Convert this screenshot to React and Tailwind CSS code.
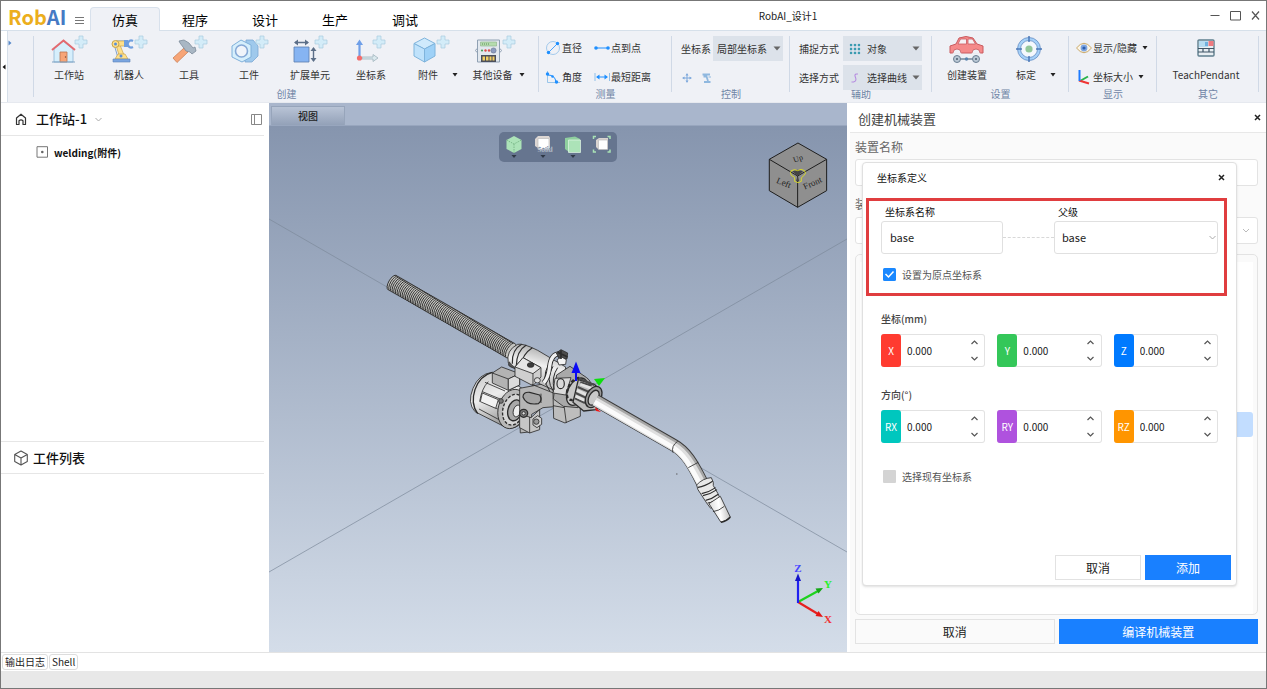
import { useState } from "react";

const Plus = ({ x, y }) => (
  <path
    transform={`translate(${x} ${y})`}
    d="M4 0h4v4h4v4h-4v4h-4v-4h-4v-4h4z"
    fill="#d3ecf8"
    stroke="#a9cbe0"
    strokeWidth="0.7"
  />
);

const HouseIcon = () => (
  <>
    <path d="M3 13L12 5l10 8v13H3z" fill="#d6effc" stroke="#8fb6d6" strokeWidth="0.8" />
    <path d="M1 14L12.500 4.500 24 14" fill="none" stroke="#e36a70" strokeWidth="2" />
    <path d="M9 16h7v10H9z" fill="#f7a577" stroke="#b97550" strokeWidth="0.8" />
    <circle cx="14.500" cy="21" r="0.7" fill="#7a4a30" />
    <path d="M1 26h23" stroke="#7fa4c4" strokeWidth="1" />
    <Plus x={24} y={0} />
  </>
);

const RobotIcon = () => (
  <>
    <path d="M3 8l4 14M5 5h11" stroke="#7fa0ce" strokeWidth="1" />
    <path d="M5 9l3 10h5L9 9z" fill="#ffe08a" stroke="#c9a54c" strokeWidth="0.7" />
    <path d="M5 5h9v5H6z" fill="#ffe08a" stroke="#c9a54c" strokeWidth="0.7" />
    <circle cx="4.500" cy="8" r="3.500" fill="#ffe08a" stroke="#c9a54c" />
    <circle cx="4.500" cy="8" r="1.500" fill="#5b8fd8" />
    <path d="M13 4h4v7h-4z" fill="#6f9fdf" />
    <path d="M22 5a3.500 3.500 0 1 0 0 6" fill="none" stroke="#6f9fdf" strokeWidth="2.200" />
    <path d="M7 18h7l3 5H4z" fill="#ffe08a" stroke="#c9a54c" strokeWidth="0.7" />
    <circle cx="10" cy="20" r="1.500" fill="#5b8fd8" />
    <path d="M2 23h17v3H2z" fill="#7ba6e0" stroke="#5b83bb" strokeWidth="0.6" />
    <Plus x={24} y={0} />
  </>
);

const HammerIcon = () => (
  <>
    <path d="M2 22L13 12l4 4L6 26.500z" fill="#f7a577" stroke="#c98058" strokeWidth="0.8" />
    <path d="M8 5l5-1 5 3 4 5 2-1 1 4-4 3-2-2-4-1-3-4-3-4z" fill="#a9b7c4" stroke="#7c8b9a" strokeWidth="0.8" />
    <Plus x={24} y={0} />
  </>
);

const NutIcon = () => (
  <>
    <path d="M15 4h7l5 6v10l-6 6h-7z" fill="#9fc9ec" stroke="#7ba8d4" strokeWidth="0.8" />
    <path d="M1 10l9-6 10 5v12l-9 5-10-5z" fill="#d6effc" stroke="#7fb0da" />
    <circle cx="10.500" cy="15" r="6" fill="#f0f4fa" stroke="#86a9d6" strokeWidth="1.600" />
    <Plus x={25} y={0} />
  </>
);

const ExtendIcon = () => (
  <>
    <path d="M2 11h15v15H2z" fill="#86b4f2" stroke="#5b7fae" strokeWidth="0.8" />
    <path d="M3 6.500h13M21.500 12.500v12" stroke="#5c6f88" strokeWidth="1.400" />
    <path d="M6 3.500v6L2 6.500zM13 3.500v6l4-3zM18.500 15h6l-3-4zM18.500 22h6l-3 4z" fill="#5c6f88" />
    <Plus x={23} y={0} />
  </>
);

const AxesIcon = () => (
  <>
    <path d="M6.500 22V8" stroke="#6f9fe8" strokeWidth="2.200" />
    <path d="M3 9l3.500-5.500L10 9z" fill="#6f9fe8" />
    <path d="M9 21h11v-2.500l5 3.500-5 3.500V23H9z" fill="#dbe9ee" stroke="#9fb4bd" strokeWidth="0.8" />
    <circle cx="6.500" cy="22" r="2.600" fill="#f26d6d" />
    <Plus x={20} y={0} />
  </>
);

const BoxIcon = () => (
  <g transform="translate(3 0)">
    <path d="M1 7.500L11.500 2 22 7.500 11.500 13z" fill="#cfeafc" stroke="#7fb4dc" />
    <path d="M1 7.500L11.500 13v13L1 20z" fill="#bfe2fb" stroke="#7fb4dc" />
    <path d="M22 7.500L11.500 13v13L22 20z" fill="#9ed1f7" stroke="#7fb4dc" />
    <Plus x={24} y={0} />
  </g>
);

const DeviceIcon = () => (
  <>
    <path d="M2.500 4h22v22h-22z" fill="#e2e8ee" stroke="#8fa0b3" />
    <path d="M5.500 6h16v4h-16z" fill="#b5dcae" stroke="#8bb287" strokeWidth="0.6" />
    <path d="M7 8h3M11 8h3" stroke="#5d8a5a" strokeDasharray="1 1" />
    <circle cx="7" cy="14.500" r="1.100" fill="#4aa05c" />
    <circle cx="10.500" cy="14.500" r="1.200" fill="#dd4b4b" />
    <circle cx="14" cy="14.500" r="1.200" fill="#dd4b4b" />
    <circle cx="18.500" cy="14.500" r="2.600" fill="#8c9cc0" stroke="#66738f" strokeWidth="0.6" />
    <path d="M6 19h15v7H6z" fill="#4b4f5c" />
    <path d="M7.500 20.500H10v4H7.500zM11 20.500h2.500v4H11zM14.500 20.500h2v4h-2zM17.500 20.500h2v4h-2z" fill="#f3cf62" />
    <path d="M2 12.500q-3 2 0 4M25 12.500q3 2 0 4" fill="none" stroke="#8fa0b3" />
    <Plus x={28} y={0} />
  </>
);

const CarIcon = () => (
  <>
    <path d="M1 17v-7l6-2 3-6q7-3 14 0l4 6 6 2v7z" fill="#f58a8a" stroke="#c95b5f" />
    <path d="M9 8l2.500-5h6v5zM19 8V3h4.500l3 5z" fill="#f6f2f5" stroke="#c95b5f" strokeWidth="0.8" />
    <path d="M4 17.500a4 4 0 0 1 8 0zM23 17.500a4 4 0 0 1 8 0z" fill="#eff1f6" stroke="#eff1f6" strokeWidth="0.8" />
    <path d="M4 17a4 4 0 0 1 8 0M23 17a4 4 0 0 1 8 0" fill="none" stroke="#c95b5f" strokeWidth="0.8" />
    <path d="M11 23h13" stroke="#6b7f92" strokeWidth="1.400" />
    <circle cx="8" cy="23" r="3.500" fill="#b9c7d4" stroke="#6b7f92" />
    <circle cx="8" cy="23" r="1" fill="#4c5e70" />
    <circle cx="27" cy="23" r="3.500" fill="#b9c7d4" stroke="#6b7f92" />
    <circle cx="27" cy="23" r="1" fill="#4c5e70" />
    <circle cx="17.500" cy="23" r="1.700" fill="#5a84ad" />
  </>
);

const TargetIcon = () => (
  <>
    <circle cx="21" cy="13" r="10" fill="#f4f8fd" stroke="#a5d0f8" strokeWidth="3" />
    <circle cx="21" cy="13" r="11.500" fill="none" stroke="#5b84bb" strokeWidth="0.7" />
    <circle cx="21" cy="13" r="8.500" fill="none" stroke="#5b84bb" strokeWidth="0.7" />
    <path d="M21 0v6M21 20v6M8 13h6M28 13h6" stroke="#4b78b8" strokeWidth="1.500" />
    <circle cx="21" cy="13" r="3.600" fill="#92c79a" />
  </>
);

const PendantIcon = () => (
  <>
    <rect x="10" y="4" width="16" height="16" rx="1" fill="#e8eef2" stroke="#5f7f8e" strokeWidth="1.400" />
    <path d="M11 5h9v6h-9z" fill="#b6dcf0" />
    <path d="M17 6h3v4h-3z" fill="#6fb0dd" />
    <path d="M20.500 5h5v5h-5z" fill="#ee7a80" />
    <path d="M10 12.500h16M10 16h16M15 12v4M21 12v4" stroke="#3f5566" strokeWidth="1.200" />
  </>
);

const Caret = () => (
  <svg width="8" height="4" viewBox="0 0 8 4" aria-hidden="true">
    <path d="M1.500 0h5L4 3.500z" fill="#222" />
  </svg>
);

function BigButton({ label, icon: Icon, wide, menu }) {
  return (
    <div className="flex items-end">
      <button className={`flex flex-col items-center ${wide}`}>
        <svg width="36" height="28" viewBox="0 0 36 28" className="overflow-visible" aria-hidden="true">
          <Icon />
        </svg>
        <span className="mt-[3px] whitespace-nowrap text-[10px] leading-4 text-[#333]">{label}</span>
      </button>
      {menu && (
        <button aria-label={`${label} 菜单`} className="flex h-4 w-2 items-center">
          <Caret />
        </button>
      )}
    </div>
  );
}

function Group({ title, width, children }) {
  return (
    <section aria-label={title} className={`flex shrink-0 flex-col ${width}`}>
      <div className="h-[61px] border-r border-[#d0d9e6]">
        <div className="h-[55px]">{children}</div>
      </div>
      <div className="-mt-1.5 text-center text-[10px] leading-4 text-[#7085a6]">{title}</div>
    </section>
  );
}

function SmallButton({ label, children, menu }) {
  return (
    <button className="flex h-[25px] items-center gap-px whitespace-nowrap pb-0.5 text-[10px] text-[#333]">
      <svg width="16" height="16" viewBox="0 0 16 16" aria-hidden="true">
        {children}
      </svg>
      {label}
      {menu && (
        <span className="ml-[3px]">
          <Caret />
        </span>
      )}
    </button>
  );
}

function RibbonSelect({ label, value, width, pad, icon }) {
  return (
    <label className="flex h-[25px] items-center justify-between whitespace-nowrap text-[10px] text-[#333]">
      {label}
      <span className={`relative flex h-full items-center ${width}`}>
        <select className={`h-full w-full appearance-none bg-[#dce2ea] text-[10px] text-[#333] ${pad}`}>
          <option>{value}</option>
        </select>
        {icon && (
          <svg width="12" height="12" viewBox="0 0 12 12" className="pointer-events-none absolute left-1.5" aria-hidden="true">
            {icon}
          </svg>
        )}
        <svg width="8" height="5" viewBox="0 0 8 5" className="pointer-events-none absolute right-0.5" aria-hidden="true">
          <path d="M0.500 0.500h7L4 4.500z" fill="#666" />
        </svg>
      </span>
    </label>
  );
}

const MENU = ["仿真", "程序", "设计", "生产", "调试"];

function TitleBar() {
  const [active, setActive] = useState("仿真");
  return (
    <header className="flex h-[29px] items-end bg-white">
      <div className="flex h-full w-[67px] shrink-0 items-center pl-[7px] pt-0.5 text-[20px] font-bold leading-none">
        <span className="text-[#ecae1c]">Rob</span>
        <span className="text-[#467ac4]">AI</span>
      </div>
      <button aria-label="菜单" className="flex h-full w-[22px] shrink-0 items-center justify-center pt-2">
        <svg width="9" height="8" viewBox="0 0 9 8" aria-hidden="true">
          <path d="M0 1.500h9M0 4.500h9M0 7.500h9" stroke="#777" />
        </svg>
      </button>
      <nav className="flex shrink-0">
        {MENU.map((m) => (
          <button
            key={m}
            onClick={() => setActive(m)}
            className={
              m === active
                ? "relative -mb-px h-6 w-[70px] rounded-t border border-b-0 border-[#d8e1ec] bg-[#eff1f6] text-[13px] leading-4 text-black"
                : "h-[23px] w-[70px] pt-0.5 text-[13px] leading-4 text-black"
            }
          >
            {m}
          </button>
        ))}
      </nav>
      <h1 className="flex h-full min-w-0 flex-1 items-center justify-center pr-[68px] text-[10px] text-[#222]">RobAI_设计1</h1>
      <div className="flex h-full shrink-0 items-center pr-px">
        <button aria-label="最小化" className="flex h-full w-[21px] items-center justify-center">
          <svg width="10" height="10" viewBox="0 0 10 10"><path d="M0.500 4.500h9" stroke="#555" /></svg>
        </button>
        <button aria-label="最大化" className="flex h-full w-[21px] items-center justify-center">
          <svg width="11" height="10" viewBox="0 0 11 10"><path d="M0.500 0.500h10v8.500h-10z" fill="none" stroke="#555" /></svg>
        </button>
        <button aria-label="关闭" className="flex h-full w-[19px] items-center justify-center">
          <svg width="9" height="9" viewBox="0 0 9 9"><path d="M1 0.500l7 8M8 0.500l-7 8" stroke="#555" strokeWidth="1.200" /></svg>
        </button>
      </div>
    </header>
  );
}

function Ribbon() {
  return (
    <div className="flex h-[73px] border-y border-t-[#d6e0ea] border-b-[#e6e9ef] bg-[#eff1f6]">
      <button aria-label="向左滚动" className="flex w-[7px] shrink-0 items-center border-r border-[#d6dfe9] bg-white">
        <svg width="5" height="6" viewBox="0 0 5 6"><path d="M4.500 0.500v5L1.500 3z" fill="#111" /></svg>
      </button>
      <div className="flex min-w-0 flex-1 overflow-hidden pt-[5px]">
        <div className="h-[61px] w-[26px] shrink-0 border-r border-[#d0d9e6] pt-1">
          <svg width="4" height="6" viewBox="0 0 4 6" aria-hidden="true"><path d="M0.500 0.500v5L3.500 3z" fill="#5688c8" /></svg>
        </div>
        <Group title="创建" width="w-[505px]">
          <div className="flex pl-[5px]">
            <BigButton label="工作站" icon={HouseIcon} wide="w-[60px]" />
            <BigButton label="机器人" icon={RobotIcon} wide="w-[60px]" />
            <BigButton label="工具" icon={HammerIcon} wide="w-[60px]" />
            <BigButton label="工件" icon={NutIcon} wide="w-[60px]" />
            <BigButton label="扩展单元" icon={ExtendIcon} wide="w-[62px]" />
            <BigButton label="坐标系" icon={AxesIcon} wide="w-[60px]" />
            <div className="flex gap-2 pl-1">
              <BigButton label="附件" icon={BoxIcon} wide="w-[46px]" menu />
              <BigButton label="其他设备" icon={DeviceIcon} wide="w-[51px]" menu />
            </div>
          </div>
        </Group>
        <Group title="测量" width="w-[133px]">
          <div className="grid grid-cols-[auto_1fr] gap-x-3 gap-y-1 pl-1.5">
            <SmallButton label="直径">
              <circle cx="8" cy="8" r="6.500" fill="none" stroke="#8fbfe8" strokeWidth="0.8" />
              <path d="M4 12l8.500-8.500" stroke="#1e8fff" strokeWidth="0.8" />
              <circle cx="3.500" cy="12.500" r="1.700" fill="#1e8fff" />
              <circle cx="12.500" cy="3.500" r="1.700" fill="#1e8fff" />
            </SmallButton>
            <SmallButton label="点到点">
              <path d="M1 8h14" stroke="#1e8fff" />
              <circle cx="2" cy="8" r="1.800" fill="#1e8fff" />
              <circle cx="14" cy="8" r="1.800" fill="#1e8fff" />
            </SmallButton>
            <SmallButton label="角度">
              <path d="M2.500 2v11.500H15" fill="none" stroke="#8fbfe8" strokeWidth="0.9" />
              <path d="M3 6q7 0 8 7" fill="none" stroke="#1e8fff" />
              <circle cx="2.500" cy="5" r="1.700" fill="#1e8fff" />
              <circle cx="7.500" cy="7.500" r="1.300" fill="#1e8fff" />
              <circle cx="11.500" cy="13" r="1.700" fill="#1e8fff" />
            </SmallButton>
            <SmallButton label="最短距离">
              <path d="M1 4v8M15.500 4v8" stroke="#8fbfe8" />
              <path d="M3 8h10" stroke="#1e8fff" />
              <path d="M5.500 5.500v5L2 8zM10.500 5.500v5L14 8z" fill="#1e8fff" />
            </SmallButton>
          </div>
        </Group>
        <Group title="控制" width="w-[118px]">
          <div className="flex flex-col gap-1 pl-[9px] pr-1.5">
            <RibbonSelect label="坐标系" value="局部坐标系" width="w-[70px]" pad="pl-1" />
            <div className="flex h-[25px] items-center gap-2.5 pl-px">
              <button aria-label="移动">
                <svg width="10" height="10" viewBox="0 0 10 10">
                  <path d="M5 1v8M1 5h8" stroke="#7fa9dc" />
                  <path d="M3.500 2.500L5 0l1.500 2.500zM3.500 7.500L5 10l1.500-2.500zM2.500 3.500L0 5l2.500 1.500zM7.500 3.500L10 5 7.500 6.500z" fill="#7fa9dc" />
                </svg>
              </button>
              <button aria-label="机器人控制">
                <svg width="10" height="10" viewBox="0 0 10 10">
                  <path d="M0.500 1.500H8M1.500 3.500h3L6 8M2 9h6.500" fill="none" stroke="#8fb8df" strokeWidth="1.800" />
                  <path d="M9 4H6.500" stroke="#8fb8df" />
                </svg>
              </button>
            </div>
          </div>
        </Group>
        <Group title="辅助" width="w-[142px]">
          <div className="flex flex-col gap-1 pl-[9px] pr-[9px]">
            <RibbonSelect
              label="捕捉方式"
              value="对象"
              width="w-[79px]"
              pad="pl-6"
              icon={
                <>
                  <path d="M2 0.500v11M6 0.500v11M10 0.500v11M0.500 2h11M0.500 6h11M0.500 10h11" stroke="#9cc4d8" />
                  <path d="M1 1h2v2H1zM5 1h2v2H5zM9 1h2v2H9zM1 5h2v2H1zM5 5h2v2H5zM9 5h2v2H9zM1 9h2v2H1zM5 9h2v2H5zM9 9h2v2H9z" fill="#3b9cb0" />
                </>
              }
            />
            <RibbonSelect
              label="选择方式"
              value="选择曲线"
              width="w-[79px]"
              pad="pl-6"
              icon={<path d="M9 2H7.500Q5 2 6.500 5.500T4.500 10H2.500" fill="none" stroke="#b58be0" strokeWidth="1.100" />}
            />
          </div>
        </Group>
        <Group title="设置" width="w-[137px]">
          <div className="flex gap-2.5 pl-[9px]">
            <BigButton label="创建装置" icon={CarIcon} wide="w-[52px]" />
            <BigButton label="标定" icon={TargetIcon} wide="w-[46px]" menu />
          </div>
        </Group>
        <Group title="显示" width="w-[88px]">
          <div className="flex flex-col gap-1 pl-[7px]">
            <SmallButton label="显示/隐藏" menu>
              <path d="M0.500 8Q8-1.500 15.500 8 8 17.500 0.500 8z" fill="#fbf5e8" stroke="#c9a86a" />
              <circle cx="8" cy="8" r="3.400" fill="#7fa6e0" />
              <circle cx="8" cy="8" r="1.600" fill="#2c5fae" />
            </SmallButton>
            <SmallButton label="坐标大小" menu>
              <path d="M4 12L12 7.500" stroke="#27b34a" strokeWidth="2" />
              <path d="M3 11.500l10 3" stroke="#f03434" strokeWidth="2" />
              <path d="M3.500 1v11" stroke="#1e7bff" strokeWidth="2" />
            </SmallButton>
          </div>
        </Group>
        <Group title="其它" width="w-[102px]">
          <div className="flex pl-2">
            <BigButton label="TeachPendant" icon={PendantIcon} wide="w-[82px]" />
          </div>
        </Group>
      </div>
    </div>
  );
}

function LeftPanel() {
  return (
    <aside className="flex w-[268px] shrink-0 flex-col bg-white pr-[5px]">
      <div className="flex h-[33px] shrink-0 items-center border-b border-[#e6e6e6] pl-[14px] pr-0.5">
        <svg width="12" height="13" viewBox="0 0 12 13" aria-hidden="true">
          <path d="M1.500 5L6 1.200 10.500 5v6.500H8V7.800Q6 6 4 7.800v3.700H1.500z" fill="none" stroke="#333" strokeWidth="1.200" strokeLinejoin="round" />
        </svg>
        <button className="ml-[9px] flex items-center gap-2 text-[13px] font-medium text-[#111]">
          工作站-1
          <svg width="7" height="5" viewBox="0 0 7 5" aria-hidden="true"><path d="M0.500 1l3 3 3-3" fill="none" stroke="#aaa" /></svg>
        </button>
        <button aria-label="切换侧栏" className="ml-auto">
          <svg width="11" height="11" viewBox="0 0 11 11"><path d="M0.500 0.500h10v10h-10zM3.500 0.500v10" fill="none" stroke="#888" /></svg>
        </button>
      </div>
      <ul className="flex-1 pl-[35px] pt-2">
        <li className="flex h-4 items-center gap-[5px] text-[10px] font-bold text-[#111]">
          <svg width="13" height="12" viewBox="0 0 13 12" aria-hidden="true">
            <path d="M1 0.700h10.500v10.500H1z" fill="none" stroke="#777" />
            <circle cx="6.300" cy="6" r="1.300" fill="#666" />
          </svg>
          welding(附件)
        </li>
      </ul>
      <section className="h-[211px] shrink-0 border-t border-[#e6e6e6]">
        <h2 className="flex h-8 items-center gap-1 border-b border-[#e6e6e6] pl-3 text-[13px] font-medium text-[#111]">
          <svg width="16" height="16" viewBox="0 0 16 16" aria-hidden="true">
            <path d="M8 1l6.300 3.500v7L8 15l-6.300-3.500v-7zM1.700 4.500L8 8l6.300-3.500M8 8v7" fill="none" stroke="#555" strokeWidth="1.100" strokeLinejoin="round" />
          </svg>
          工件列表
        </h2>
      </section>
    </aside>
  );
}

const RINGS = Array.from({ length: 72 }, (_, i) => ({ x: 52 + i * 5, y: 53 + i * 2.87 }));

function Torch() {
  return (
    <g transform="translate(375 265) scale(0.3333)" stroke="#2b2b2b" strokeWidth="2.500" strokeLinejoin="round">
      {RINGS.map((r) => (
        <ellipse key={r.x} cx={r.x} cy={r.y} rx="11" ry="25" transform={`rotate(30 ${r.x} ${r.y})`} fill="#c4c4c0" strokeWidth="2.600" />
      ))}
      {/* motor */}
      <path d="M352 322q-40 4-58 48t6 70l90 46q22 8 40-4l14-20 0-90-70-46z" fill="url(#metal)" />
      <path d="M352 322q-38 10-52 52t8 72" fill="none" strokeWidth="4" />
      <path d="M340 350q-20 20-26 60M322 380l58 24M316 404l52 28M312 432l60 32M330 352l60 26" fill="none" />
      <path d="M322 384l48 20-8 26-46-20z" fill="#f2f2f2" />
      <ellipse cx="412" cy="432" rx="42" ry="60" transform="rotate(16 412 432)" fill="#b9b9b9" />
      <ellipse cx="416" cy="434" rx="32" ry="47" transform="rotate(16 416 434)" fill="#d6d6d6" strokeWidth="4" strokeDasharray="9 5" />
      <ellipse cx="420" cy="436" rx="21" ry="32" transform="rotate(16 420 436)" fill="#a8a8a8" strokeWidth="4" />
      <ellipse cx="426" cy="438" rx="11" ry="18" transform="rotate(16 426 438)" fill="#eee" />
      <circle cx="378" cy="408" r="7" fill="#777" />
      <path d="M352 324l28-18 54 20v34l-34 16-48-22z" fill="#b3b3b3" />
      <path d="M352 324l48 18 34-16M400 342v32" fill="none" />
      <path d="M400 342l34-16v34l-34 16z" fill="#dcdcdc" />
      {/* gun body */}
      <path d="M428 238q16-4 60 18l84 50-6 80-42-10-124-82q-8-38 28-56z" fill="url(#body)" />
      <path d="M440 238q-30 16-28 58M454 240q-30 18-30 64M472 248q-30 20-32 50" fill="none" strokeWidth="3.500" />
      <path d="M404 290q-8 12 4 16l14 6" fill="#555" />
      <path d="M420 306l24-28 54 30v28l-24 26-54-28z" fill="#cfcfcf" />
      <path d="M444 278l54 30-24 18-54-20z" fill="#e6e6e6" />
      <path d="M474 326v36" />
      <ellipse cx="467" cy="300" rx="10" ry="7" fill="#3c3c3c" />
      <ellipse cx="487" cy="346" rx="9" ry="8" fill="#ddd" />
      {/* bracket */}
      <path d="M434 370l64-12 40 18 12 48-46 4-34 20v52l-34 4-2-50z" fill="#b5b5b5" />
      <path d="M434 446l34 12 26-24v60l-30 10-30-16z" fill="#c6c6c6" />
      <path d="M464 456v48M470 358l70 28" />
      <path d="M444 396q0-16 20-14l30 8q10 16-4 26-36 6-46-20z" fill="#a3a3a3" strokeWidth="3.500" />
      <path d="M498 386v28" />
      <circle cx="446" cy="445" r="12" fill="#777" strokeWidth="4" />
      <circle cx="446" cy="445" r="5" fill="#ddd" />
      <path d="M474 462l14-10 12 8v18l-14 10-12-8z" fill="#cfcfcf" />
      <circle cx="484" cy="470" r="8" fill="#999" />
      <path d="M534 382l34 10 48-14v76l-46 20-34-14z" fill="#bdbdbd" />
      <path d="M568 392v36l-34-6M568 428l6 46" fill="none" />
      {/* clamp */}
      <path d="M545 330l40-26 50 34q20 14 8 34l-34 56-44-4-30-22z" fill="#a9a9a9" />
      <path d="M540 340l48-2-16 52-38-6z" fill="#dadada" />
      <ellipse cx="557" cy="356" rx="11" ry="15" fill="#d9d9d9" strokeWidth="3.500" />
      <path d="M520 300q-22 40 4 78M534 304q-24 40 2 76M548 308q-20 30-10 66" fill="none" strokeWidth="3" />
      {/* cable */}
      <path d="M506 354q14-14 18-50t28-38" fill="none" strokeWidth="15" />
      <path d="M506 354q14-14 18-50t28-38" fill="none" stroke="#f1f1f1" strokeWidth="10" />
      <path d="M544 264l14-10 20 10-2 18-22 2z" fill="#4b4b4b" />
      <path d="M546 284l14-8 14 8-2 14-20 2z" fill="#f4f4f4" />
      <path d="M548 262l30 14M558 256v26" strokeWidth="5" />
      {/* knob */}
      <ellipse cx="606" cy="380" rx="27" ry="44" transform="rotate(28 606 380)" fill="#c8c8c8" strokeWidth="4" />
      <ellipse cx="600" cy="372" rx="20" ry="36" transform="rotate(28 600 372)" fill="none" strokeWidth="7" strokeDasharray="10 7" />
      <path d="M610 344l48 14q24 20 20 42l-14 34-38 4-32-26z" fill="#bcbcbc" strokeWidth="4" />
      <path d="M616 352l34 10M608 366l32 14M602 384l30 14M600 400l30 14M612 340l46 20" strokeWidth="6" stroke="#4a4a4a" />
      <path d="M616 358l32 12M606 376l30 14M602 394l26 12" strokeWidth="8" stroke="#e4e4e4" />
      <ellipse cx="656" cy="396" rx="22" ry="34" transform="rotate(28 656 396)" fill="#9a9a9a" strokeWidth="4" />
      <ellipse cx="656" cy="398" rx="14" ry="24" transform="rotate(28 656 398)" fill="#c8c8c8" strokeWidth="4" />
      {/* neck */}
      <path d="M662 406L896 540C932 560 952 594 981 652" fill="none" stroke="#3b3b3b" strokeWidth="38" />
      <path d="M661 406L896 541C932 561 952 596 981 652" fill="none" stroke="#a6a6a6" strokeWidth="33" />
      <path d="M659 409L893 543C929 563 949 598 978 654" fill="none" stroke="#dedede" strokeWidth="26" />
      <path d="M659 411L891 545C926 565 945 600 974 655" fill="none" stroke="#fbfbfb" strokeWidth="14" />
      <path d="M908 529q-20 14-14 34M970 592l-30 16" fill="none" />
      {/* nozzle */}
      <path d="M965 660q18-20 44-22l6 14 0 10 14 24 6 14-2 16-26 14-12-16-26-40z" fill="#e8e8e8" />
      <path d="M969 667q20-2 44-18M980 686q22-4 42-18M984 692q22-4 42-18M992 706q20-4 38-18M998 714q18-2 38-16" fill="none" strokeWidth="3.500" />
      <path d="M1002 716l34-22 30 62q-12 12-28 16z" fill="url(#tip)" />
      <path d="M1014 740q18-2 34-16" fill="none" />
      <path d="M1038 772q18-4 28-16" fill="none" strokeWidth="5" />
    </g>
  );
}

function Scene() {
  return (
    <svg viewBox="269 126 578 526" preserveAspectRatio="xMidYMid slice" className="absolute inset-0 h-full w-full" role="img" aria-label="三维视图">
      <defs>
        <linearGradient id="metal" x1="0" y1="0" x2="0.400" y2="1">
          <stop offset="0" stopColor="#c4c4c4" />
          <stop offset="0.500" stopColor="#ededed" />
          <stop offset="1" stopColor="#9a9a9a" />
        </linearGradient>
        <linearGradient id="body" x1="0.600" y1="0" x2="0.300" y2="1">
          <stop offset="0" stopColor="#a0a0a0" />
          <stop offset="0.400" stopColor="#f0f0f0" />
          <stop offset="1" stopColor="#9c9c9c" />
        </linearGradient>
        <linearGradient id="tip" x1="0" y1="0.600" x2="1" y2="0.400">
          <stop offset="0" stopColor="#d8d8d8" />
          <stop offset="0.500" stopColor="#ffffff" />
          <stop offset="1" stopColor="#b5b5b5" />
        </linearGradient>
      </defs>
      <path d="M269 219L847 552M269 572L847 239" stroke="#7d899b" strokeWidth="0.7" />
      <Torch />
      <path d="M576 381v-10" stroke="#0a0af5" strokeWidth="2" />
      <path d="M571.500 373l4.500-11.500 4.500 11.500z" fill="#0a0af5" />
      <path d="M594 379l11-1-6 8z" fill="#0ce00c" />
      <path d="M595 407l1 4 5 1z" fill="#f01818" />
      <path d="M676 474h1.500" stroke="#444" strokeWidth="0.800" />
      {/* orientation cube */}
      <g transform="translate(480 100) scale(0.3333)" strokeLinejoin="round">
        <path d="M954 129l86 49v94l-87 50-85-50v-94z" fill="#8f8f8f" stroke="#1d1d1d" strokeWidth="3" />
        <path d="M868 178l85 50 87-50M953 228v94" fill="none" stroke="#1d1d1d" strokeWidth="3" />
        <path d="M953 228l-16-14 16-5 16 5zM953 228l-5 16h10z" fill="#444" />
        <path d="M934 212q10-6 19 0 10-8 21 0 6 10-2 14l-8 8v10q-10 8-20 0v-12l-10-6q-5-8 0-14z" fill="none" stroke="#e6e619" strokeWidth="2.500" />
        <g fill="#1f1f1f" fontFamily='"Liberation Serif", serif' fontSize="27" textAnchor="middle">
          <text x="954" y="184" fontSize="24" transform="rotate(-20 954 176)">Up</text>
          <text x="911" y="257" transform="rotate(22 911 250)">Left</text>
          <text x="998" y="258" transform="rotate(-24 998 250)">Front</text>
        </g>
      </g>
      {/* axis triad */}
      <path d="M798 602L818 591" stroke="#1ed21e" strokeWidth="2.200" />
      <path d="M823 588l-7.500 0.500 3 5z" fill="#14a814" />
      <path d="M798 602l20 12" stroke="#e62020" strokeWidth="2.200" />
      <path d="M823 617l-4.500-6-3 5z" fill="#e61414" />
      <path d="M798 603V580" stroke="#2020f0" strokeWidth="2.200" />
      <path d="M795 581l3-7.500 3 7.500z" fill="#1414c8" />
      <g fontFamily='"Liberation Serif", serif' fontWeight="700" fontSize="11" textAnchor="middle">
        <text x="798" y="572" fill="#4646ff">Z</text>
        <text x="828" y="588" fill="#28f028">Y</text>
        <text x="828" y="623" fill="#f03232">X</text>
      </g>
    </svg>
  );
}

const VIEW_TOOLS = [
  {
    name: "视角",
    menu: true,
    art: (
      <>
        <path d="M10 1l7.500 4v9L10 18l-7.500-4V5z" fill="#ace3b8" />
        <path d="M2.500 5L10 9l7.500-4M10 9v9" fill="none" stroke="#6fae7e" strokeDasharray="1.500 1" strokeWidth="0.800" />
      </>
    ),
  },
  {
    name: "显示模式",
    menu: true,
    art: (
      <>
        <path d="M2 4l3-3h11l1 2v10H5l-3-2z" fill="#dcd6d3" />
        <path d="M5 3.500h11v11H5z" fill="#fff" stroke="#bbb" strokeWidth="0.700" />
        <text x="12" y="17" fontSize="6" fontWeight="700" textAnchor="middle" fill="#e9eef5" stroke="#66758f" strokeWidth="0.300">Solid</text>
      </>
    ),
  },
  {
    name: "剖切",
    menu: true,
    art: (
      <>
        <path d="M2 3l10-1.500L17 4v13H6L2 14z" fill="#8fcf9f" />
        <path d="M5.500 5H17.500v12.500H5.500z" fill="#ace3b8" stroke="#e3f6e7" strokeWidth="0.700" />
      </>
    ),
  },
  {
    name: "适应窗口",
    menu: false,
    art: (
      <>
        <path d="M1.500 4V1.500H4M15.500 1.500H18V4M18 14.500V17h-2.500M4 17H1.500v-2.500" fill="none" stroke="#a9e2b5" strokeWidth="1.500" />
        <path d="M4 5l3-2h9v11H6l-2-2z" fill="#d9d3d0" />
        <path d="M6.500 5h9v9.500h-9z" fill="#fff" stroke="#bbb" strokeWidth="0.700" />
      </>
    ),
  },
];

function Viewport() {
  return (
    <section className="flex min-w-0 flex-1 flex-col bg-[#a9b6cc]">
      <div className="flex h-[23px] shrink-0 items-end border-b border-[#98a6be] pl-0.5">
        <button className="h-[19px] w-[74px] border border-b-0 border-[#97a5bb] bg-linear-to-b from-[#b9c4d6] to-[#93a1b8] text-[10px] font-medium leading-4 text-[#222]">视图</button>
      </div>
      <div className="relative flex-1 overflow-hidden bg-linear-to-b from-[#8695ae] to-[#d4dde9]">
        <Scene />
        <div className="absolute left-1/2 top-1.5 flex h-[30px] w-[118px] -translate-x-1/2 items-start justify-between rounded-[5px] bg-[#66758f] px-[5px] pt-[3px]">
          {VIEW_TOOLS.map((t) => (
            <button key={t.name} aria-label={t.name} className="flex flex-col items-center">
              <svg width="20" height="20" viewBox="0 0 20 20" className="overflow-visible">
                {t.art}
              </svg>
              {t.menu && (
                <svg width="6" height="3" viewBox="0 0 6 3"><path d="M0.500 0h5L3 3z" fill="#2f3947" /></svg>
              )}
            </button>
          ))}
        </div>
      </div>
    </section>
  );
}

const AXES = [
  { name: "X", color: "bg-[#ff3b30]" },
  { name: "Y", color: "bg-[#34c759]" },
  { name: "Z", color: "bg-[#007aff]" },
];
const ROTATIONS = [
  { name: "RX", color: "bg-[#00c7be]" },
  { name: "RY", color: "bg-[#af52de]" },
  { name: "RZ", color: "bg-[#ff9500]" },
];

function SpinBox({ name, color, step }) {
  const [value, setValue] = useState("0.000");
  const bump = (d) => setValue(((parseFloat(value) || 0) + d).toFixed(3));
  return (
    <div className="flex h-[33px] min-w-0 rounded-[3px] border border-l-0 border-[#e2e2e2] bg-white">
      <label htmlFor={`field-${name}`} className={`-my-px flex w-5 shrink-0 items-center justify-center rounded-[3px] text-[10px] text-white ${color}`}>
        {name}
      </label>
      <input
        id={`field-${name}`}
        inputMode="decimal"
        value={value}
        onChange={(e) => setValue(e.target.value)}
        className="w-0 min-w-0 flex-1 px-1.5 text-[10px] text-[#222] outline-none"
      />
      <div className="flex w-5 shrink-0 flex-col">
        <button aria-label={`${name} 增加`} onClick={() => bump(step)} className="flex flex-1 items-center justify-center">
          <svg width="7" height="5" viewBox="0 0 7 5"><path d="M0.500 4l3-3 3 3" fill="none" stroke="#555" strokeWidth="1.200" /></svg>
        </button>
        <button aria-label={`${name} 减少`} onClick={() => bump(-step)} className="flex flex-1 items-center justify-center">
          <svg width="7" height="5" viewBox="0 0 7 5"><path d="M0.500 1l3 3 3-3" fill="none" stroke="#555" strokeWidth="1.200" /></svg>
        </button>
      </div>
    </div>
  );
}

const CloseMark = () => (
  <svg width="7" height="7" viewBox="0 0 7 7" aria-hidden="true">
    <path d="M1 1l5 5M6 1L1 6" stroke="#222" strokeWidth="1.500" />
  </svg>
);

function FrameDialog() {
  const [origin, setOrigin] = useState(true);
  return (
    <div role="dialog" aria-label="坐标系定义" className="absolute left-3 right-[29px] top-[59px] flex h-[424px] flex-col rounded-sm border border-[#e0e0e0] bg-white shadow-sm">
      <div className="flex h-[35px] shrink-0 items-center justify-between pb-1.5 pl-[14px] pr-[11px] text-[10px] text-[#111]">
        <h3>坐标系定义</h3>
        <button aria-label="关闭">
          <CloseMark />
        </button>
      </div>
      <div className="ml-[3px] mr-[9px] h-[98px] border-3 border-[#e03d3f] pl-3 pr-1.5 pt-[3px] text-[10px] text-[#111]">
        <div className="grid grid-cols-[122px_1fr_164px] items-end">
          <label htmlFor="frame-name" className="pl-1 leading-4">坐标系名称</label>
          <span />
          <label htmlFor="frame-parent" className="pl-1 leading-4">父级</label>
          <input id="frame-name" defaultValue="base" className="mt-px h-[33px] w-full rounded-[3px] border border-[#e0e0e0] pb-px pl-2 text-[11px] text-[#222] outline-none" />
          <span className="mb-4 border-t border-dashed border-[#d8d8d8]" />
          <span className="relative mt-px flex h-[33px] items-center">
            <select id="frame-parent" className="h-full w-full appearance-none rounded-[3px] border border-[#e0e0e0] bg-white pl-[7px] text-[11px] text-[#222] outline-none">
              <option>base</option>
            </select>
            <svg width="7" height="5" viewBox="0 0 7 5" className="pointer-events-none absolute right-0.5" aria-hidden="true">
              <path d="M0.500 1l3 3 3-3" fill="none" stroke="#aaa" />
            </svg>
          </span>
        </div>
        <label className="mt-3 flex h-4 items-center gap-1.5 pl-0.5 text-[#555]">
          <input
            type="checkbox"
            checked={origin}
            onChange={(e) => setOrigin(e.target.checked)}
            className="peer sr-only"
          />
          <svg width="13" height="13" viewBox="0 0 13 13" aria-hidden="true">
            <rect width="13" height="13" rx="1.500" fill={origin ? "#1a88ff" : "#d4d4d4"} />
            {origin && <path d="M2.500 6l3 3 5-5.500" fill="none" stroke="#fff" strokeWidth="1.500" />}
          </svg>
          设置为原点坐标系
        </label>
      </div>
      <div className="px-[18px]">
        <h4 className="mt-[15px] text-[10px] font-medium leading-4 text-[#444]">坐标(mm)</h4>
        <div className="mt-[7px] grid grid-cols-3 gap-3">
          {AXES.map((a) => (
            <SpinBox key={a.name} name={a.name} color={a.color} step={1} />
          ))}
        </div>
        <h4 className="mt-5 text-[10px] font-medium leading-4 text-[#444]">方向(°)</h4>
        <div className="mt-[7px] grid grid-cols-3 gap-3">
          {ROTATIONS.map((a) => (
            <SpinBox key={a.name} name={a.name} color={a.color} step={1} />
          ))}
        </div>
        <label className="mt-[25px] flex h-4 items-center gap-1.5 pl-0.5 text-[10px] text-[#555]">
          <input type="checkbox" className="size-[13px] appearance-none rounded-[1px] bg-[#d4d4d4] checked:bg-[#1a88ff]" />
          选择现有坐标系
        </label>
      </div>
      <div className="mb-[5px] mr-[5px] mt-auto flex justify-end gap-1 text-[12px]">
        <button className="h-[25px] w-[86px] border border-[#e2e2e2] bg-white text-[#222]">取消</button>
        <button className="h-[25px] w-[86px] bg-[#1980ff] text-white">添加</button>
      </div>
    </div>
  );
}

function MechanismPanel() {
  return (
    <aside className="relative flex w-[419px] shrink-0 flex-col border-l-3 border-white bg-[#fafafa]">
      <div className="flex h-[30px] shrink-0 items-center justify-between border-b border-[#e8e8e8] bg-white pl-2 pr-[5px]">
        <h2 className="pt-0.5 text-[13px] text-[#444]">创建机械装置</h2>
        <button aria-label="关闭">
          <CloseMark />
        </button>
      </div>
      <div className="flex min-h-0 flex-1 flex-col pb-2 pl-[5px] pr-2">
        <label htmlFor="mech-name" className="mt-1 text-[12px] leading-5 text-[#666]">装置名称</label>
        <input id="mech-name" className="mt-0.5 h-[27px] rounded-[3px] border border-[#e3e3e3] bg-white px-2" />
        <label htmlFor="mech-type" className="mt-2.5 text-[12px] leading-4 text-[#666]">装</label>
        <div className="relative mt-[5px] flex h-[27px] items-center">
          <select id="mech-type" className="h-full w-full appearance-none rounded-[3px] border border-[#e3e3e3] bg-white" />
          <svg width="8" height="5" viewBox="0 0 8 5" className="pointer-events-none absolute right-2" aria-hidden="true">
            <path d="M1 1l3 3 3-3" fill="none" stroke="#bbb" />
          </svg>
        </div>
        <div className="mt-2.5 flex min-h-0 flex-1 flex-col rounded-[5px] border border-[#e3e3e3] px-1 pt-[7px]">
          <div className="flex flex-1 items-start justify-end bg-white pt-[150px]">
            <button aria-label="添加坐标系" className="h-[25px] w-20 rounded-[3px] bg-[#c2ddff]" />
          </div>
        </div>
        <div className="mt-1 grid grid-cols-2 gap-1 text-[12px]">
          <button className="h-[25px] border border-[#e3e3e3] bg-[#fafafa] text-[#222]">取消</button>
          <button className="h-[25px] bg-[#1980ff] text-white">编译机械装置</button>
        </div>
      </div>
      <FrameDialog />
    </aside>
  );
}

export default function App() {
  return (
    <div
      className="flex h-screen w-full flex-col overflow-hidden border border-[#777] bg-white"
      style={{ fontFamily: '"Noto Sans CJK SC", "Noto Sans", sans-serif' }}
    >
      <TitleBar />
      <Ribbon />
      <main className="flex min-h-0 flex-1">
        <LeftPanel />
        <Viewport />
        <MechanismPanel />
      </main>
      <div className="flex h-[19px] shrink-0 items-center gap-px border-t border-[#e3e3e3] bg-white pl-px text-[10px] text-[#222]">
        <button className="h-4 rounded-[3px] border border-[#ddd] px-0.5 leading-3">输出日志</button>
        <button className="h-4 rounded-[3px] border border-[#ddd] px-0.5 leading-3">Shell</button>
      </div>
      <footer className="h-[17px] shrink-0 bg-[#e8e8e8]" />
    </div>
  );
}
